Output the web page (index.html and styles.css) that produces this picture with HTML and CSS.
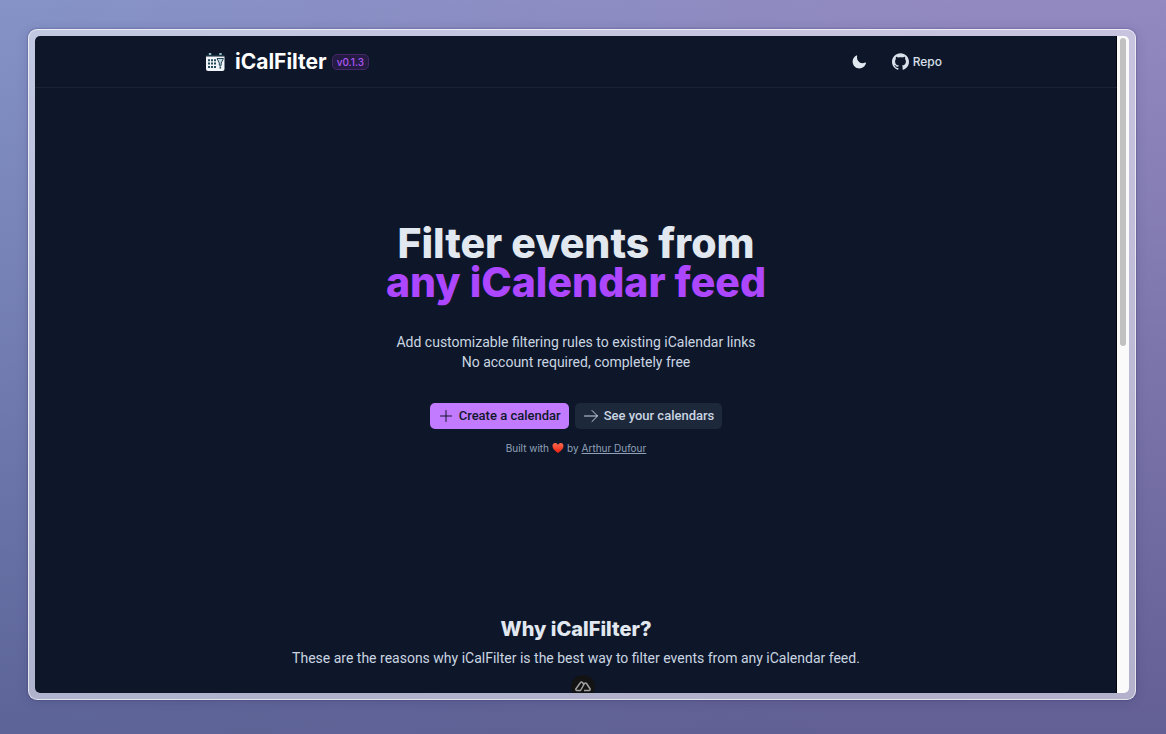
FILE: index.html
```html
<!DOCTYPE html>
<html lang="en">
<head>
<meta charset="utf-8">
<meta name="viewport" content="width=device-width, initial-scale=1">
<title>iCalFilter</title>
<link rel="stylesheet" href="styles.css">
</head>
<body>
<div class="frame">
  <div class="window">
    <div class="page">
      <header class="header">
        <div class="header-inner">
          <a class="brand" href="#">
            <svg class="logo" viewBox="0 0 20 20" aria-hidden="true">
              <path d="M5 1v3M15.500 1v3" stroke="#8eb6c4" stroke-width="2.400"/>
              <path d="M1 4.500h18.500v12.500a2 2 0 0 1-2 2h-14.500a2 2 0 0 1-2-2z" fill="#f1f5f9"/>
              <path d="M1 3.500h18.500" stroke="#163442" stroke-width="1.200"/>
              <path d="M3 7.300h2v2H3zM6 7.300h2v2H6zM9 7.300h2v2H9zM3 10.600h2v2H3zM6 10.600h2v2H6zM9 10.600h2v2H9zM3 13.900h2v2H3zM6 13.900h2v2H6zM9 13.900h2v2H9z" fill="#24495a"/>
              <path d="M12 6.500h6.500l-2.300 4.500v2.300h-1.900V11z" fill="#c4d4dc" stroke="#24495a"/>
              <path d="M15.300 14.500v2" stroke="#24495a" stroke-width="1.600"/>
            </svg>
            <span class="brand-name">iCalFilter</span>
            <span class="version">v0.1.3</span>
          </a>
          <nav class="nav">
            <button class="icon-button" type="button" aria-label="Switch theme">
              <svg class="moon" viewBox="0 0 20 20" aria-hidden="true"><path fill="currentColor" fill-rule="evenodd" d="M7.455 2.004a.75.75 0 0 1 .26.77 7 7 0 0 0 9.958 7.967.75.75 0 0 1 1.067.853A8.500 8.500 0 1 1 6.647 1.921a.75.75 0 0 1 .808.083"/></svg>
            </button>
            <a class="repo" href="#">
              <svg class="github" viewBox="0 0 24 24" aria-hidden="true"><path fill="currentColor" d="M12 .297c-6.630 0-12 5.373-12 12 0 5.303 3.438 9.800 8.205 11.385.6.113.82-.258.82-.577 0-.285-.01-1.040-.015-2.040-3.338.724-4.042-1.610-4.042-1.610C4.422 18.070 3.633 17.700 3.633 17.700c-1.087-.744.084-.729.084-.729 1.205.084 1.838 1.236 1.838 1.236 1.070 1.835 2.809 1.305 3.495.998.108-.776.417-1.305.76-1.605-2.665-.3-5.466-1.332-5.466-5.930 0-1.310.465-2.380 1.235-3.220-.135-.303-.54-1.523.105-3.176 0 0 1.005-.322 3.300 1.230.96-.267 1.980-.399 3-.405 1.020.006 2.040.138 3 .405 2.280-1.552 3.285-1.230 3.285-1.230.645 1.653.24 2.873.12 3.176.765.840 1.230 1.910 1.230 3.220 0 4.610-2.805 5.625-5.475 5.920.42.360.81 1.096.81 2.220 0 1.606-.015 2.896-.015 3.286 0 .315.210.690.825.570C20.565 22.092 24 17.592 24 12.297c0-6.627-5.373-12-12-12"/></svg>
              <span>Repo</span>
            </a>
          </nav>
        </div>
      </header>
      <main>
        <section class="hero">
          <h1 class="title">Filter events from<br><span class="accent">any iCalendar feed</span></h1>
          <p class="lead">Add customizable filtering rules to existing iCalendar links<br>No account required, completely free</p>
          <div class="actions">
            <a class="action primary" href="#">
              <svg class="action-icon" viewBox="0 0 16 16" aria-hidden="true"><path d="M8 2.500v11M2.500 8h11"/></svg>
              <span>Create a calendar</span>
            </a>
            <a class="action secondary" href="#">
              <svg class="action-icon" viewBox="0 0 16 16" aria-hidden="true"><path d="M1.500 8h13M9 2.500 14.500 8 9 13.500"/></svg>
              <span>See your calendars</span>
            </a>
          </div>
          <p class="credit">Built with
            <svg class="heart" viewBox="0 0 24 24" role="img" aria-label="love">
              <defs><linearGradient id="heart-fill" x2="0" y2="1"><stop stop-color="#ff6b50"/><stop offset="1" stop-color="#e8200f"/></linearGradient></defs>
              <path fill="url(#heart-fill)" d="M12 22C8 19 1 14 1 8c0-7 8-8 11-2 3-6 11-5 11 2 0 6-7 11-11 14z"/>
            </svg>
            by <a href="#">Arthur Dufour</a></p>
        </section>
        <section class="why">
          <h2 class="why-title">Why iCalFilter?</h2>
          <p class="why-text">These are the reasons why iCalFilter is the best way to filter events from any iCalendar feed.</p>
        </section>
      </main>
      <button class="devtools" type="button" aria-label="Toggle devtools">
        <svg viewBox="0 0 32 22" aria-hidden="true"><path d="M18 19h10c2 0 3-2 2-3.500L23 5c-1-1.500-3-1.500-4 0l-8 14H4c-2 0-3-2-2-3.500L11 3c1-1.500 3-1.500 4 0l3 5"/></svg>
      </button>
    </div>
    <div class="scrollbar" aria-hidden="true"><div class="thumb"></div></div>
  </div>
</div>
</body>
</html>
```
FILE: styles.css
```css
* { box-sizing: border-box; }

body {
  margin: 0;
  min-height: 100vh;
  display: flex;
  padding: 29px 30px 34px 28px;
  font-family: "Inter", sans-serif;
  background:
    linear-gradient(to bottom, rgba(50, 55, 105, 0) 0%, rgba(50, 55, 105, 0.5) 100%),
    linear-gradient(100deg, #8593c7 0%, #9289c0 75%, #9489c2 100%);
}

h1, h2, p { margin: 0; }

.frame {
  flex: 1;
  display: flex;
  padding: 6px;
  border: 1px solid rgba(255, 255, 255, 0.65);
  border-radius: 9px;
  background: rgba(255, 255, 255, 0.5);
  box-shadow: 0 0 2px rgba(40, 35, 90, 0.6), 0 2px 12px rgba(40, 35, 90, 0.16);
}

.window {
  flex: 1;
  display: flex;
  border-radius: 5px;
  overflow: hidden;
  background: #fafafa;
}

.page {
  position: relative;
  flex: 1;
  overflow: hidden;
  background: #0e1729;
  box-shadow: inset -1px 0 #02040c;
  color: #e2e8f0;
}

.header {
  border-bottom: 1px solid #192335;
}

.header-inner {
  display: flex;
  align-items: center;
  justify-content: space-between;
  width: 742px;
  max-width: 100%;
  height: 51px;
  margin: 0 auto;
}

.brand {
  display: flex;
  align-items: center;
  color: #ffffff;
  text-decoration: none;
}

.logo { width: 20px; height: 20px; margin-right: 10px; }

.brand-name {
  font-size: 21px;
  line-height: 28px;
  font-weight: 700;
}

.version {
  margin-left: 5px;
  padding: 0 4px;
  border: 1px solid #452768;
  border-radius: 5px;
  background: #241b42;
  color: #ad57f5;
  font-size: 10px;
  line-height: 14px;
  font-weight: 500;
}

.nav {
  display: flex;
  align-items: center;
  gap: 14px;
}

.icon-button {
  display: flex;
  padding: 6px;
  border: 0;
  background: none;
  color: #e2e8f0;
}

.moon { width: 16px; height: 16px; }

.repo {
  display: flex;
  align-items: center;
  gap: 4px;
  padding: 6px 5px;
  color: #d9e0ea;
  font-size: 12px;
  line-height: 16px;
  font-weight: 500;
  text-decoration: none;
}

.github { width: 17px; height: 17px; }

.hero {
  display: flex;
  flex-direction: column;
  align-items: center;
  padding: 136px 24px 160px;
  text-align: center;
}

.title {
  font-size: 41px;
  line-height: 39px;
  font-weight: 800;
}

.accent { color: #ad46ff; }

.lead {
  margin-top: 30px;
  color: #cad5e2;
  font-family: "Roboto", sans-serif;
  font-size: 14px;
  line-height: 20px;
}

.actions {
  display: flex;
  gap: 6px;
  margin-top: 31px;
}

.action {
  display: flex;
  align-items: center;
  gap: 5px;
  padding: 5px 8px;
  border-radius: 5px;
  font-family: "Roboto", sans-serif;
  font-size: 13px;
  line-height: 16px;
  font-weight: 500;
  text-decoration: none;
}

.primary { background: #c27aff; color: #0f172b; }
.secondary { background: #1d293b; color: #cad5e2; }

.action-icon {
  width: 16px;
  height: 16px;
  fill: none;
  stroke: currentColor;
  stroke-linecap: round;
  stroke-linejoin: round;
}

.credit {
  display: flex;
  align-items: center;
  gap: 3px;
  margin-top: 11px;
  color: #90a1b9;
  font-size: 10px;
  line-height: 16px;
}

.credit a { color: inherit; }

.heart { width: 12px; height: 12px; }

.why {
  padding: 0 24px;
  text-align: center;
}

.why-title {
  font-size: 20px;
  line-height: 26px;
  font-weight: 800;
}

.why-text {
  margin-top: 6px;
  color: #cad5e2;
  font-family: "Roboto", sans-serif;
  font-size: 14px;
  line-height: 20px;
}

.devtools {
  position: absolute;
  left: calc(50% + 7px);
  bottom: -6px;
  width: 24px;
  height: 24px;
  padding: 5px 4px 7px;
  border: 0;
  border-radius: 12px;
  background: #131313;
  transform: translateX(-50%);
}

.devtools svg {
  display: block;
  width: 16px;
  height: 11px;
  fill: none;
  stroke: #a0a0a0;
  stroke-width: 3;
  stroke-linejoin: round;
}

.scrollbar {
  width: 12px;
  padding: 2px 3px 0;
}

.thumb {
  height: 47%;
  border-radius: 4px;
  background: #c1c1c1;
}
```
